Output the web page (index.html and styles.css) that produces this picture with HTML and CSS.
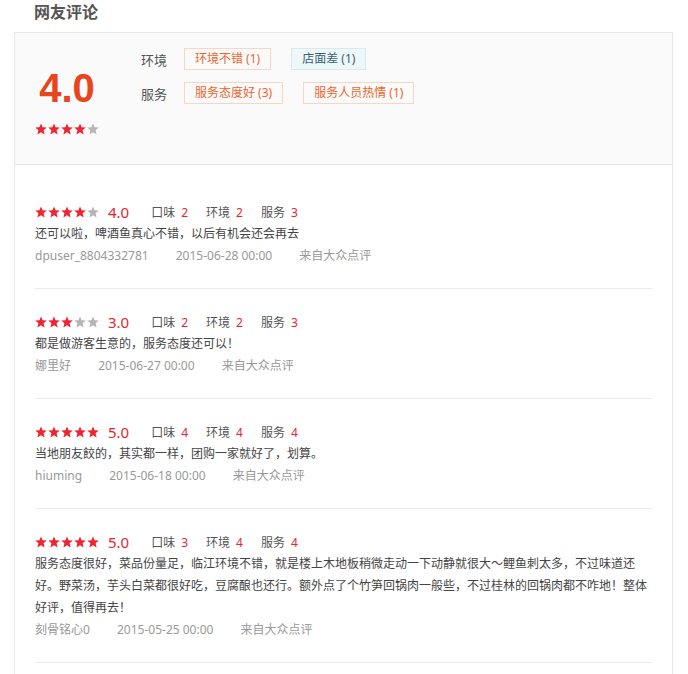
FILE: index.html
```html
<!DOCTYPE html>
<html lang="zh-CN">
<head>
  <meta charset="UTF-8" />
  <title>网友评论</title>
  <link rel="stylesheet" href="styles.css">
</head>
<body>

  <h2 class="section-title">网友评论</h2>

  <div class="comment-box">
    <div class="summary">
      <div class="summary-score">
        <div class="big-score">4.0</div>
        <div class="stars">
          <svg class="star on" viewBox="0 0 12 12"><polygon points="6,0.4 7.6,4.2 11.7,4.5 8.6,7.2 9.6,11.4 6,9.2 2.4,11.4 3.4,7.2 0.3,4.5 4.4,4.2"/></svg>
          <svg class="star on" viewBox="0 0 12 12"><polygon points="6,0.4 7.6,4.2 11.7,4.5 8.6,7.2 9.6,11.4 6,9.2 2.4,11.4 3.4,7.2 0.3,4.5 4.4,4.2"/></svg>
          <svg class="star on" viewBox="0 0 12 12"><polygon points="6,0.4 7.6,4.2 11.7,4.5 8.6,7.2 9.6,11.4 6,9.2 2.4,11.4 3.4,7.2 0.3,4.5 4.4,4.2"/></svg>
          <svg class="star on" viewBox="0 0 12 12"><polygon points="6,0.4 7.6,4.2 11.7,4.5 8.6,7.2 9.6,11.4 6,9.2 2.4,11.4 3.4,7.2 0.3,4.5 4.4,4.2"/></svg>
          <svg class="star" viewBox="0 0 12 12"><polygon points="6,0.4 7.6,4.2 11.7,4.5 8.6,7.2 9.6,11.4 6,9.2 2.4,11.4 3.4,7.2 0.3,4.5 4.4,4.2"/></svg>
        </div>
      </div>
      <div class="summary-tags">
        <div class="tag-row">
          <span class="tag-label">环境</span>
          <span class="tag good">环境不错 (1)</span>
          <span class="tag bad">店面差 (1)</span>
        </div>
        <div class="tag-row">
          <span class="tag-label">服务</span>
          <span class="tag good">服务态度好 (3)</span>
          <span class="tag good">服务人员热情 (1)</span>
        </div>
      </div>
    </div>

    <ul class="review-list">
      <li class="review">
        <div class="review-rating">
          <span class="stars">
            <svg class="star on" viewBox="0 0 12 12"><polygon points="6,0.4 7.6,4.2 11.7,4.5 8.6,7.2 9.6,11.4 6,9.2 2.4,11.4 3.4,7.2 0.3,4.5 4.4,4.2"/></svg>
            <svg class="star on" viewBox="0 0 12 12"><polygon points="6,0.4 7.6,4.2 11.7,4.5 8.6,7.2 9.6,11.4 6,9.2 2.4,11.4 3.4,7.2 0.3,4.5 4.4,4.2"/></svg>
            <svg class="star on" viewBox="0 0 12 12"><polygon points="6,0.4 7.6,4.2 11.7,4.5 8.6,7.2 9.6,11.4 6,9.2 2.4,11.4 3.4,7.2 0.3,4.5 4.4,4.2"/></svg>
            <svg class="star on" viewBox="0 0 12 12"><polygon points="6,0.4 7.6,4.2 11.7,4.5 8.6,7.2 9.6,11.4 6,9.2 2.4,11.4 3.4,7.2 0.3,4.5 4.4,4.2"/></svg>
            <svg class="star" viewBox="0 0 12 12"><polygon points="6,0.4 7.6,4.2 11.7,4.5 8.6,7.2 9.6,11.4 6,9.2 2.4,11.4 3.4,7.2 0.3,4.5 4.4,4.2"/></svg>
          </span>
          <span class="score">4.0</span>
          <span class="sub first">口味<em>2</em></span>
          <span class="sub">环境<em>2</em></span>
          <span class="sub">服务<em>3</em></span>
        </div>
        <p class="review-text">还可以啦，啤酒鱼真心不错，以后有机会还会再去</p>
        <div class="review-meta">
          <span>dpuser_8804332781</span>
          <span>2015-06-28 00:00</span>
          <span>来自大众点评</span>
        </div>
      </li>

      <li class="review">
        <div class="review-rating">
          <span class="stars">
            <svg class="star on" viewBox="0 0 12 12"><polygon points="6,0.4 7.6,4.2 11.7,4.5 8.6,7.2 9.6,11.4 6,9.2 2.4,11.4 3.4,7.2 0.3,4.5 4.4,4.2"/></svg>
            <svg class="star on" viewBox="0 0 12 12"><polygon points="6,0.4 7.6,4.2 11.7,4.5 8.6,7.2 9.6,11.4 6,9.2 2.4,11.4 3.4,7.2 0.3,4.5 4.4,4.2"/></svg>
            <svg class="star on" viewBox="0 0 12 12"><polygon points="6,0.4 7.6,4.2 11.7,4.5 8.6,7.2 9.6,11.4 6,9.2 2.4,11.4 3.4,7.2 0.3,4.5 4.4,4.2"/></svg>
            <svg class="star" viewBox="0 0 12 12"><polygon points="6,0.4 7.6,4.2 11.7,4.5 8.6,7.2 9.6,11.4 6,9.2 2.4,11.4 3.4,7.2 0.3,4.5 4.4,4.2"/></svg>
            <svg class="star" viewBox="0 0 12 12"><polygon points="6,0.4 7.6,4.2 11.7,4.5 8.6,7.2 9.6,11.4 6,9.2 2.4,11.4 3.4,7.2 0.3,4.5 4.4,4.2"/></svg>
          </span>
          <span class="score">3.0</span>
          <span class="sub first">口味<em>2</em></span>
          <span class="sub">环境<em>2</em></span>
          <span class="sub">服务<em>3</em></span>
        </div>
        <p class="review-text">都是做游客生意的，服务态度还可以！</p>
        <div class="review-meta">
          <span>娜里好</span>
          <span>2015-06-27 00:00</span>
          <span>来自大众点评</span>
        </div>
      </li>

      <li class="review">
        <div class="review-rating">
          <span class="stars">
            <svg class="star on" viewBox="0 0 12 12"><polygon points="6,0.4 7.6,4.2 11.7,4.5 8.6,7.2 9.6,11.4 6,9.2 2.4,11.4 3.4,7.2 0.3,4.5 4.4,4.2"/></svg>
            <svg class="star on" viewBox="0 0 12 12"><polygon points="6,0.4 7.6,4.2 11.7,4.5 8.6,7.2 9.6,11.4 6,9.2 2.4,11.4 3.4,7.2 0.3,4.5 4.4,4.2"/></svg>
            <svg class="star on" viewBox="0 0 12 12"><polygon points="6,0.4 7.6,4.2 11.7,4.5 8.6,7.2 9.6,11.4 6,9.2 2.4,11.4 3.4,7.2 0.3,4.5 4.4,4.2"/></svg>
            <svg class="star on" viewBox="0 0 12 12"><polygon points="6,0.4 7.6,4.2 11.7,4.5 8.6,7.2 9.6,11.4 6,9.2 2.4,11.4 3.4,7.2 0.3,4.5 4.4,4.2"/></svg>
            <svg class="star on" viewBox="0 0 12 12"><polygon points="6,0.4 7.6,4.2 11.7,4.5 8.6,7.2 9.6,11.4 6,9.2 2.4,11.4 3.4,7.2 0.3,4.5 4.4,4.2"/></svg>
          </span>
          <span class="score">5.0</span>
          <span class="sub first">口味<em>4</em></span>
          <span class="sub">环境<em>4</em></span>
          <span class="sub">服务<em>4</em></span>
        </div>
        <p class="review-text">当地朋友餃的，其实都一样，团购一家就好了，划算。</p>
        <div class="review-meta">
          <span>hiuming</span>
          <span>2015-06-18 00:00</span>
          <span>来自大众点评</span>
        </div>
      </li>

      <li class="review">
        <div class="review-rating">
          <span class="stars">
            <svg class="star on" viewBox="0 0 12 12"><polygon points="6,0.4 7.6,4.2 11.7,4.5 8.6,7.2 9.6,11.4 6,9.2 2.4,11.4 3.4,7.2 0.3,4.5 4.4,4.2"/></svg>
            <svg class="star on" viewBox="0 0 12 12"><polygon points="6,0.4 7.6,4.2 11.7,4.5 8.6,7.2 9.6,11.4 6,9.2 2.4,11.4 3.4,7.2 0.3,4.5 4.4,4.2"/></svg>
            <svg class="star on" viewBox="0 0 12 12"><polygon points="6,0.4 7.6,4.2 11.7,4.5 8.6,7.2 9.6,11.4 6,9.2 2.4,11.4 3.4,7.2 0.3,4.5 4.4,4.2"/></svg>
            <svg class="star on" viewBox="0 0 12 12"><polygon points="6,0.4 7.6,4.2 11.7,4.5 8.6,7.2 9.6,11.4 6,9.2 2.4,11.4 3.4,7.2 0.3,4.5 4.4,4.2"/></svg>
            <svg class="star on" viewBox="0 0 12 12"><polygon points="6,0.4 7.6,4.2 11.7,4.5 8.6,7.2 9.6,11.4 6,9.2 2.4,11.4 3.4,7.2 0.3,4.5 4.4,4.2"/></svg>
          </span>
          <span class="score">5.0</span>
          <span class="sub first">口味<em>3</em></span>
          <span class="sub">环境<em>4</em></span>
          <span class="sub">服务<em>4</em></span>
        </div>
        <p class="review-text">服务态度很好，菜品份量足，临江环境不错，就是楼上木地板稍微走动一下动静就很大～鲤鱼刺太多，不过味道还好。野菜汤，芋头白菜都很好吃，豆腐酿也还行。额外点了个竹笋回锅肉一般些，不过桂林的回锅肉都不咋地！整体好评，值得再去！</p>
        <div class="review-meta">
          <span>刻骨铭心0</span>
          <span>2015-05-25 00:00</span>
          <span>来自大众点评</span>
        </div>
      </li>
    </ul>
  </div>

</body>
</html>
```

FILE: styles.css
```css
:root {
  --red: #e8262d;
  --orange: #f0652c;
  --text: #333;
  --muted: #999;
  --line: #e8e8e8;
}

body {
  margin: 0;
  padding: 0 14px;
  background: #fff;
  font-family: "Noto Sans", "Noto Sans CJK SC", sans-serif;
  font-size: 12px;
  color: var(--text);
}

.section-title {
  margin: 0 0 8px;
  padding-left: 20px;
  font-size: 16px;
  line-height: 24px;
  font-weight: bold;
  color: #555;
}

.comment-box {
  width: 659px;
  box-sizing: border-box;
  border: 1px solid var(--line);
}

/* summary header */
.summary {
  display: flex;
  padding: 15px 20px 25px;
  background: #fafafa;
  border-bottom: 1px solid var(--line);
}

.summary-score {
  width: 64px;
  margin-top: 18px;
  text-align: center;
}

.big-score {
  font-family: "Liberation Sans", sans-serif;
  font-size: 40px;
  line-height: 44px;
  font-weight: bold;
  color: #e8441d;
}

.summary-score .stars {
  margin-top: 13px;
}

.summary-tags {
  margin-left: 42px;
}

.tag-row {
  display: flex;
  align-items: center;
  margin-bottom: 12px;
}

.tag-row:last-child {
  margin-bottom: 0;
}

.tag-label {
  width: 43px;
  font-size: 13px;
  color: #555;
}

.tag {
  margin-right: 20px;
  padding: 0 10px;
  line-height: 20px;
  border: 1px solid #f9d6c2;
  color: var(--orange);
}

.tag.bad {
  background: #eef7fa;
  border-color: #d6eaf0;
  color: #3a6273;
}

/* stars */
.stars {
  display: inline-flex;
  gap: 1px;
}

.star {
  width: 12px;
  height: 12px;
  fill: #b5b5b5;
}

.star.on {
  fill: #ee2632;
}

/* review list */
.review-list {
  list-style: none;
  margin: 0;
  padding: 14px 20px 20px;
}

.review {
  padding: 22px 0 21px;
  border-bottom: 1px solid #ececec;
}

.review-rating {
  display: flex;
  align-items: center;
  height: 22px;
}

.score {
  margin-left: 9px;
  font-size: 15px;
  color: var(--red);
}

.sub {
  margin-left: 18px;
  color: #555;
}

.sub.first {
  margin-left: 22px;
}

.sub em {
  font-style: normal;
  margin-left: 6px;
  color: var(--red);
}

.review-text {
  margin: 0;
  line-height: 22px;
  color: #444;
}

.review-meta {
  line-height: 22px;
  color: var(--muted);
}

.review-meta span {
  margin-right: 24px;
}
```
